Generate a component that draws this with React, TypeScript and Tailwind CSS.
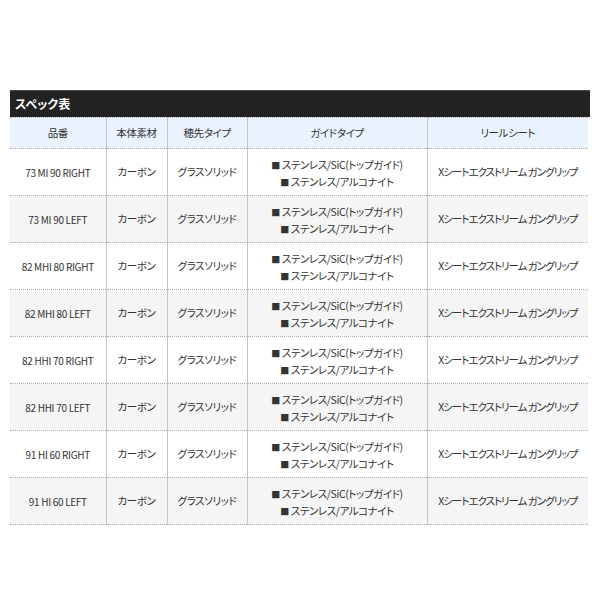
const rows = [
  '73 MI 90 RIGHT',
  '73 MI 90 LEFT',
  '82 MHI 80 RIGHT',
  '82 MHI 80 LEFT',
  '82 HHI 70 RIGHT',
  '82 HHI 70 LEFT',
  '91 HI 60 RIGHT',
  '91 HI 60 LEFT',
];

export default function App() {
  return (
    <div
      className="w-[600px] h-[600px] bg-white pt-[90px] px-[10px] text-[10.5px] tracking-[-0.4px] text-[#333] [font-feature-settings:'palt']"
      style={{ fontFamily: '"Noto Sans CJK JP", "Noto Sans", sans-serif' }}
    >
      {/* Title bar */}
      <div className="h-[27px] bg-[#222] border-t border-[#4a4a4a] flex items-center pl-[5px] text-white font-bold text-[12px] tracking-normal">
        スペック表
      </div>

      <table className="w-[578px] border-collapse table-fixed">
        <colgroup>
          <col className="w-[96px]" />
          <col className="w-[61px]" />
          <col className="w-[80px]" />
          <col className="w-[180px]" />
          <col className="w-[161px]" />
        </colgroup>
        <thead>
          <tr className="h-[31px] bg-[#e9f2fd] border-y border-dotted border-[#aaa]">
            <th className="font-normal text-center border-r border-[#c6c6c6]">品番</th>
            <th className="font-normal text-center border-r border-[#c6c6c6]">本体素材</th>
            <th className="font-normal text-center border-r border-[#c6c6c6]">穂先タイプ</th>
            <th className="font-normal text-center border-r border-[#c6c6c6]">ガイドタイプ</th>
            <th className="font-normal text-center">リールシート</th>
          </tr>
        </thead>
        <tbody>
          {rows.map((name, i) => (
            <tr
              key={name}
              className={`h-[47px] border-b border-dotted border-[#aaa] ${i % 2 === 1 ? 'bg-[#f5f5f5]' : 'bg-white'}`}
            >
              <td className="text-center border-r border-solid border-[#c6c6c6] text-[10px] tracking-[-0.3px] whitespace-nowrap">{name}</td>
              <td className="text-center border-r border-solid border-[#c6c6c6]">カーボン</td>
              <td className="text-center border-r border-solid border-[#c6c6c6]">グラスソリッド</td>
              <td className="text-center border-r border-solid border-[#c6c6c6] leading-[16px] whitespace-nowrap pt-[3px]">
                <div>
                  <span className="text-[9px]">■</span> ステンレス/SiC(トップガイド)
                </div>
                <div>
                  <span className="text-[9px]">■</span> ステンレス/アルコナイト
                </div>
              </td>
              <td className="text-center whitespace-nowrap tracking-[-1px]">Xシートエクストリーム ガングリップ</td>
            </tr>
          ))}
        </tbody>
      </table>
    </div>
  );
}
